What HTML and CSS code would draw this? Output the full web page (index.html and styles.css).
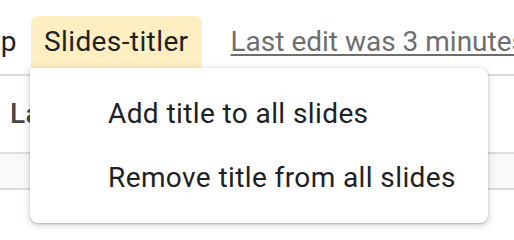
FILE: index.html
```
<!DOCTYPE html>
<html>
<head>
<meta charset="utf-8">
<link rel="stylesheet" href="styles.css">
</head>
<body>
<div class="app">
  <div class="menubar">
    <span class="menu-item help">Help</span>
    <span class="menu-item active">Slides-titler</span>
    <a class="last-edit" href="#">Last edit was 3 minutes ago</a>
  </div>
  <div class="toolbar">
    <span class="tb-label">Layout</span>
  </div>
  <div class="ruler"></div>
  <div class="dropdown">
    <div class="dd-item">Add title to all slides</div>
    <div class="dd-item">Remove title from all slides</div>
  </div>
</div>
</body>
</html>
```
FILE: styles.css
```
html, body {
  margin: 0;
  padding: 0;
  background: #ffffff;
  overflow: hidden;
}
.app {
  position: relative;
  width: 514px;
  height: 240px;
  overflow: hidden;
  font-family: Roboto, "Liberation Sans", sans-serif;
  font-size: 28px;
  letter-spacing: 0.4px;
  color: #202124;
}
.menubar {
  display: flex;
  align-items: center;
  white-space: nowrap;
  padding-top: 16px;
  height: 52px;
}
.menu-item {
  line-height: 52px;
  height: 52px;
}
.help {
  margin-left: -42px;
  margin-right: 14px;
}
.active {
  background: #feefc3;
  border-radius: 7px 7px 0 0;
  padding: 0 13px 0 13px;
}
.last-edit {
  margin-left: 29px;
  color: #6e6e6e;
  letter-spacing: 0;
  text-decoration: underline;
  text-underline-offset: 3px;
  line-height: 52px;
}
.toolbar {
  margin-top: 6px;
  border-top: 2px solid #dadce0;
  height: 76px;
  line-height: 76px;
  padding-left: 10px;
}
.tb-label {
  color: #444746;
  font-weight: 500;
}
.ruler {
  height: 34px;
  background: #f8f9fa;
  border-top: 2px solid #dadce0;
  border-bottom: 2px solid #dadce0;
}
.dropdown {
  position: absolute;
  left: 30px;
  top: 68px;
  width: 458px;
  box-sizing: border-box;
  padding: 14px 0 13px;
  background: #ffffff;
  border-radius: 0 8px 8px 8px;
  box-shadow: 0 2px 6px 2px rgba(60, 64, 67, 0.15), 0 1px 2px rgba(60, 64, 67, 0.3);
}
.dd-item {
  line-height: 64px;
  height: 64px;
  padding-left: 78px;
  white-space: nowrap;
}
```
